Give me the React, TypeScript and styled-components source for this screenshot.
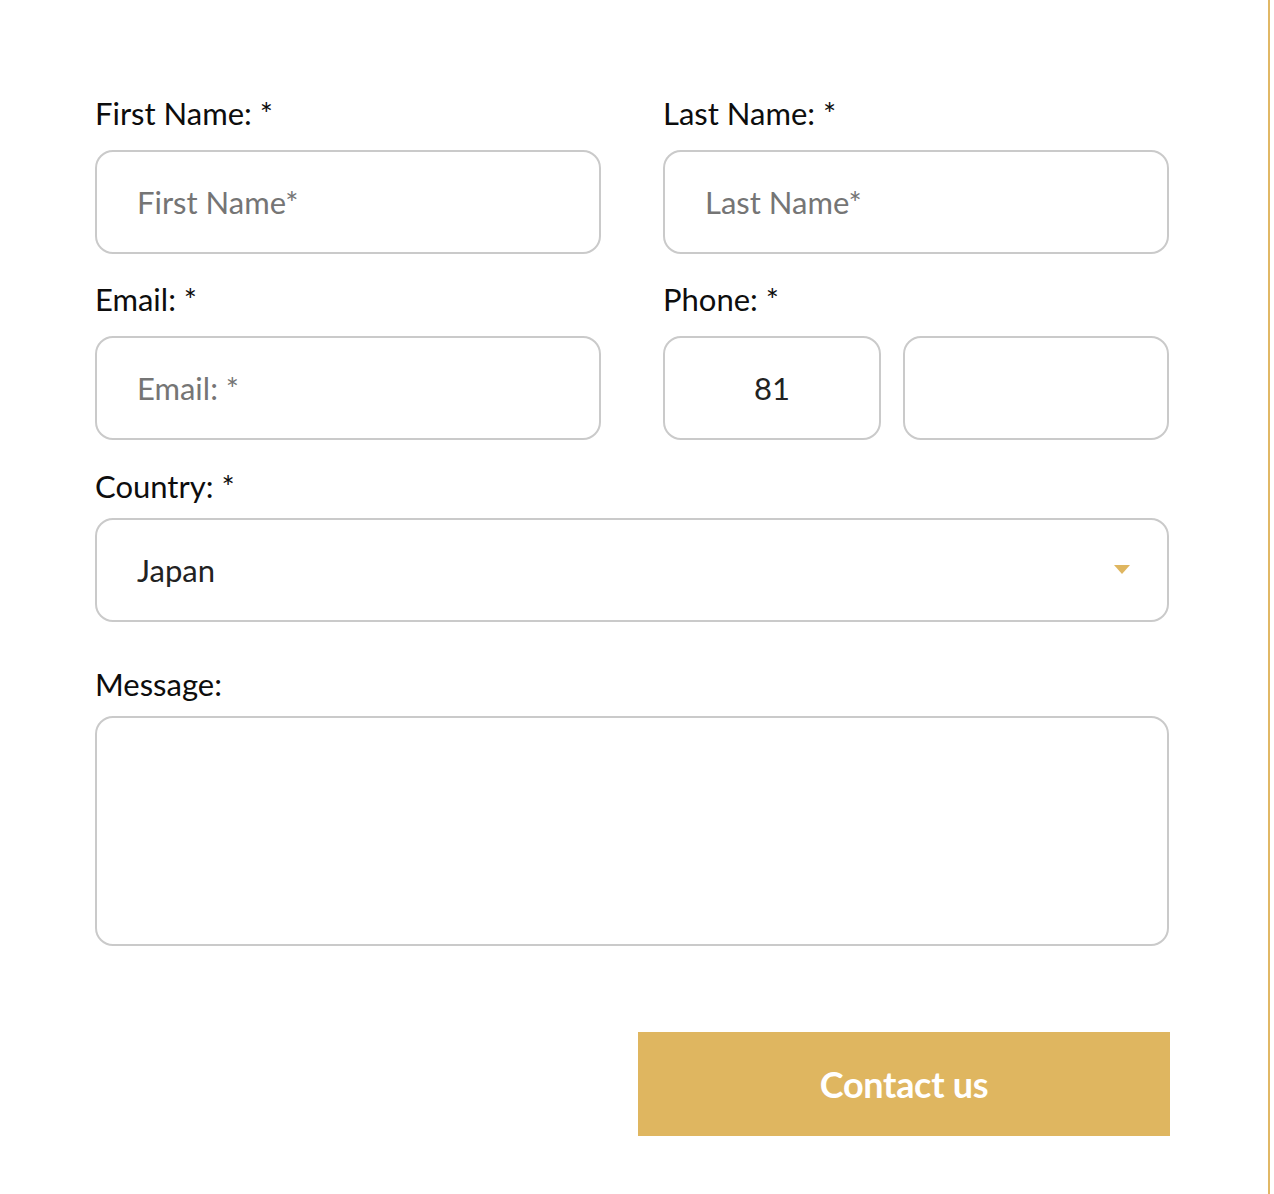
import styled, { createGlobalStyle } from "styled-components";

const GlobalStyle = createGlobalStyle`
  html, body {
    margin: 0;
    padding: 0;
    background: #ffffff;
  }
  body {
    font-family: Lato, "Open Sans", Arial, sans-serif;
    color: #111111;
  }
  * {
    box-sizing: border-box;
  }
`;

const Panel = styled.div`
  width: 1270px;
  min-height: 1210px;
  margin-top: -14px;
  border-top: 2px solid #e1b866;
  border-right: 2px solid #e1b866;
  border-top-right-radius: 14px;
  background: #ffffff;
  padding: 108px 0 60px 95px;
`;

const Form = styled.form`
  width: 1074px;
  display: flex;
  flex-direction: column;
`;

const Row = styled.div<{ columns?: string; mt?: number }>`
  display: grid;
  grid-template-columns: ${({ columns }) => columns || "1fr 1fr"};
  column-gap: 62px;
  margin-top: ${({ mt }) => mt ?? 0}px;
`;

const Field = styled.div`
  display: flex;
  flex-direction: column;
`;

const Label = styled.label<{ gap?: number }>`
  font-size: 31px;
  line-height: 34px;
  color: #0d0d0d;
  margin-bottom: ${({ gap }) => gap ?? 20}px;
`;

const Input = styled.input<{ center?: boolean }>`
  width: 100%;
  height: 104px;
  border: 2px solid #cacaca;
  border-radius: 18px;
  padding: 0 40px;
  font-family: Lato, "Open Sans", Arial, sans-serif;
  font-size: 31px;
  color: #222222;
  background: #ffffff;
  outline: none;
  text-align: ${({ center }) => (center ? "center" : "left")};

  ::placeholder {
    color: #7d7d7d;
    opacity: 1;
  }
`;

const PhoneGroup = styled.div`
  display: grid;
  grid-template-columns: 218px 1fr;
  column-gap: 22px;
`;

const SelectWrap = styled.div`
  position: relative;
`;

const Select = styled.select`
  width: 100%;
  height: 104px;
  border: 2px solid #cacaca;
  border-radius: 18px;
  padding: 0 40px;
  font-family: Lato, "Open Sans", Arial, sans-serif;
  font-size: 31px;
  color: #222222;
  background: #ffffff;
  appearance: none;
  -webkit-appearance: none;
  outline: none;
`;

const Arrow = styled.svg`
  position: absolute;
  right: 39px;
  top: 47px;
  width: 16px;
  height: 10px;
  pointer-events: none;
`;

const TextArea = styled.textarea`
  width: 100%;
  height: 230px;
  border: 2px solid #cacaca;
  border-radius: 18px;
  padding: 24px 40px;
  font-family: Lato, "Open Sans", Arial, sans-serif;
  font-size: 31px;
  resize: none;
  outline: none;
  display: block;
`;

const Actions = styled.div`
  display: flex;
  justify-content: flex-end;
  margin-top: 86px;
  margin-right: -1px;
`;

const SubmitButton = styled.button`
  width: 532px;
  height: 104px;
  border: none;
  background: #dfb660;
  color: #ffffff;
  font-family: Lato, "Open Sans", Arial, sans-serif;
  font-weight: 700;
  font-size: 36px;
  letter-spacing: -0.3px;
  cursor: pointer;
`;

export default function App() {
  return (
    <>
      <GlobalStyle />
      <Panel>
        <Form onSubmit={(e) => e.preventDefault()}>
          <Row>
            <Field>
              <Label>First Name: *</Label>
              <Input placeholder="First Name*" />
            </Field>
            <Field>
              <Label>Last Name: *</Label>
              <Input placeholder="Last Name*" />
            </Field>
          </Row>
          <Row mt={28}>
            <Field>
              <Label>Email: *</Label>
              <Input placeholder="Email: *" />
            </Field>
            <Field>
              <Label>Phone: *</Label>
              <PhoneGroup>
                <Input center defaultValue="81" />
                <Input />
              </PhoneGroup>
            </Field>
          </Row>
          <Row columns="1fr" mt={29}>
            <Field>
              <Label gap={15}>Country: *</Label>
              <SelectWrap>
                <Select defaultValue="Japan">
                  <option>Japan</option>
                </Select>
                <Arrow viewBox="0 0 16 10">
                  <polygon points="0,0 16,0 8,9" fill="#dfb660" />
                </Arrow>
              </SelectWrap>
            </Field>
          </Row>
          <Row columns="1fr" mt={45}>
            <Field>
              <Label gap={15}>Message:</Label>
              <TextArea />
            </Field>
          </Row>
          <Actions>
            <SubmitButton type="submit">Contact us</SubmitButton>
          </Actions>
        </Form>
      </Panel>
    </>
  );
}
